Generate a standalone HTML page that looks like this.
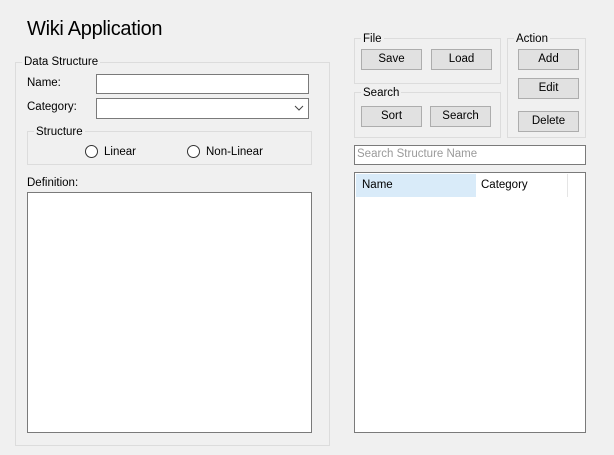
<!DOCTYPE html>
<html><head><style>
*{margin:0;padding:0;box-sizing:border-box}
body{width:614px;height:455px;background:#f0f0f0;font-family:"Liberation Sans",sans-serif;font-size:11.5px;color:#000;position:relative;overflow:hidden}
.a{position:absolute}
.grp{position:absolute;border:1px solid #dcdcdc}
.lg{position:absolute;background:#f0f0f0;padding:0 2px;line-height:12px}
.tb{position:absolute;background:#fff;border:1px solid #7a7a7a}
.btn{position:absolute;background:#e1e1e1;border:1px solid #adadad;text-align:center;line-height:19px}
.rad{position:absolute;width:13px;height:13px;border:1px solid #333;border-radius:50%;background:#fff}
</style></head><body>
<div class="a" style="left:27px;top:18px;font-size:20px;letter-spacing:-0.3px">Wiki Application</div>

<div class="grp" style="left:15px;top:62px;width:315px;height:384px"></div>
<div class="lg" style="left:22px;top:56px">Data Structure</div>
<div class="a" style="left:27px;top:77px">Name:</div>
<div class="tb" style="left:96px;top:74px;width:213px;height:20px"></div>
<div class="a" style="left:27px;top:101px">Category:</div>
<div class="tb" style="left:96px;top:98px;width:213px;height:21px"></div>
<svg class="a" style="left:294px;top:104px" width="10" height="8"><path d="M1 2 L5 6 L9 2" stroke="#444" fill="none"/></svg>

<div class="grp" style="left:27px;top:131px;width:285px;height:34px"></div>
<div class="lg" style="left:34px;top:126px">Structure</div>
<div class="rad" style="left:85px;top:145px"></div>
<div class="a" style="left:104px;top:146px">Linear</div>
<div class="rad" style="left:187px;top:145px"></div>
<div class="a" style="left:206px;top:146px">Non-Linear</div>
<div class="a" style="left:27px;top:177px">Definition:</div>
<div class="tb" style="left:27px;top:192px;width:285px;height:241px"></div>

<div class="grp" style="left:354px;top:38px;width:147px;height:46px"></div>
<div class="lg" style="left:361px;top:33px">File</div>
<div class="btn" style="left:361px;top:49px;width:61px;height:21px">Save</div>
<div class="btn" style="left:431px;top:49px;width:61px;height:21px">Load</div>

<div class="grp" style="left:354px;top:92px;width:147px;height:46px"></div>
<div class="lg" style="left:361px;top:87px">Search</div>
<div class="btn" style="left:361px;top:106px;width:61px;height:21px">Sort</div>
<div class="btn" style="left:430px;top:106px;width:61px;height:21px">Search</div>

<div class="grp" style="left:507px;top:38px;width:79px;height:100px"></div>
<div class="lg" style="left:514px;top:33px">Action</div>
<div class="btn" style="left:518px;top:49px;width:61px;height:21px">Add</div>
<div class="btn" style="left:518px;top:78px;width:61px;height:21px">Edit</div>
<div class="btn" style="left:518px;top:111px;width:61px;height:21px">Delete</div>

<div class="tb" style="left:354px;top:145px;width:232px;height:20px;color:#9a9a9a;padding:2px 0 0 2px">Search Structure Name</div>
<div class="tb" style="left:354px;top:172px;width:232px;height:261px">
 <div class="a" style="left:1px;top:1px;width:120px;height:23px;background:#d9ebf9"></div>
 <div class="a" style="left:7px;top:6px">Name</div>
 <div class="a" style="left:126px;top:6px">Category</div>
 <div class="a" style="left:212px;top:1px;width:1px;height:23px;background:#e5e5e5"></div>
</div>
</body></html>
